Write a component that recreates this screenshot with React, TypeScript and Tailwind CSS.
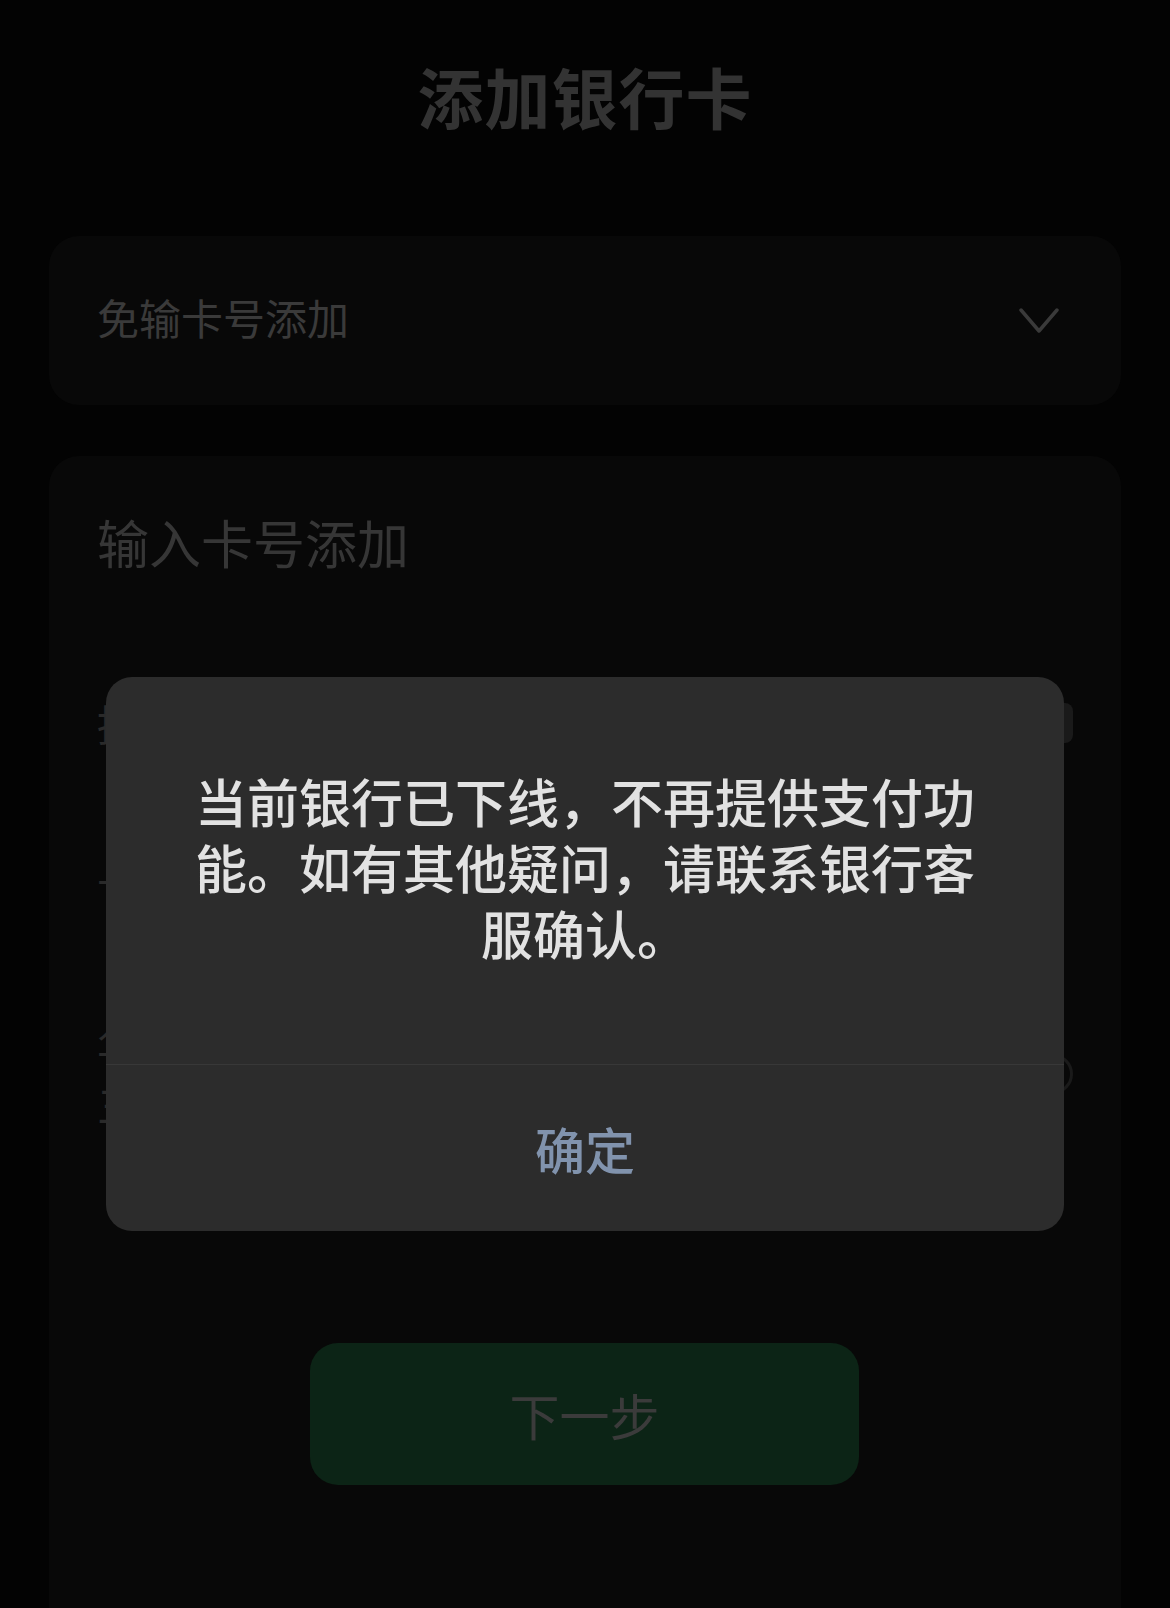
import React from 'react';

const font = { fontFamily: '"Noto Sans CJK SC", "Noto Sans", sans-serif' };

const Chevron = () => (
  <svg width="40" height="28" viewBox="0 0 40 28" fill="none" stroke="#3a3a3a" strokeWidth="3.5" strokeLinecap="round" strokeLinejoin="round">
    <polyline points="2 3 20 24 38 3" />
  </svg>
);

export default function App() {
  return (
    <div className="relative w-[1170px] h-[1608px] overflow-hidden bg-[#030303]" style={font}>
      {/* Page (dimmed behind the mask) */}
      <div className="h-[190px] flex items-center justify-center">
        <h1 className="text-[66px] leading-none font-bold text-[#333333] tracking-[1px]">添加银行卡</h1>
      </div>

      <div className="mt-[46px] mx-[49px] h-[169px] rounded-[30px] bg-[#080808] flex items-center justify-between pl-[48px] pr-[62px]">
        <span className="text-[42px] leading-none text-[#3a3a3a] mb-[8px]">免输卡号添加</span>
        <Chevron />
      </div>

      <div className="mt-[51px] mx-[49px] h-[1200px] rounded-[30px] bg-[#080808] px-[48px] pt-[60px]">
        <div className="text-[52px] leading-none text-[#363636]">输入卡号添加</div>

        <div className="mt-[130px] flex flex-col">
          <div className="flex items-center justify-between h-[50px]">
            <span className="text-[42px] leading-none text-[#2a2a2a]">持卡人</span>
            <span className="w-[30px] h-[40px] rounded-[8px] bg-[#1a1a1a]" />
          </div>
          <div className="mt-[110px] flex items-center h-[50px]">
            <span className="text-[42px] leading-none text-[#2a2a2a]">卡号</span>
          </div>
          <div className="mt-[106px] flex items-center justify-between">
            <div className="text-[42px] leading-[60px] text-[#2a2a2a]">
              <div>华夏银行</div>
              <div>三类账户</div>
            </div>
            <span className="w-[40px] h-[40px] rounded-full border-[3px] border-[#1a1a1a]" />
          </div>
        </div>
      </div>

      <div className="absolute left-[310px] top-[1343px] w-[549px] h-[142px] rounded-[28px] bg-[#0c2416] flex items-center justify-center">
        <span className="text-[50px] leading-none text-[#3b3b3b]">下一步</span>
      </div>

      {/* Alert dialog */}
      <div className="absolute left-[106px] top-[677px] w-[958px] h-[554px] rounded-[26px] bg-[#2c2c2c] flex flex-col">
        <div className="h-[387px] flex items-center justify-center px-[84px] pb-[8px]">
          <p className="text-[52px] leading-[66px] text-center font-medium text-[#e2e2e2]">
            当前银行已下线，不再提供支付功能。如有其他疑问，请联系银行客服确认。
          </p>
        </div>
        <div className="h-px bg-[#383838]" />
        <div className="flex-1 flex items-center justify-center">
          <span className="text-[50px] leading-none font-medium text-[#8193ad]">确定</span>
        </div>
      </div>
    </div>
  );
}
